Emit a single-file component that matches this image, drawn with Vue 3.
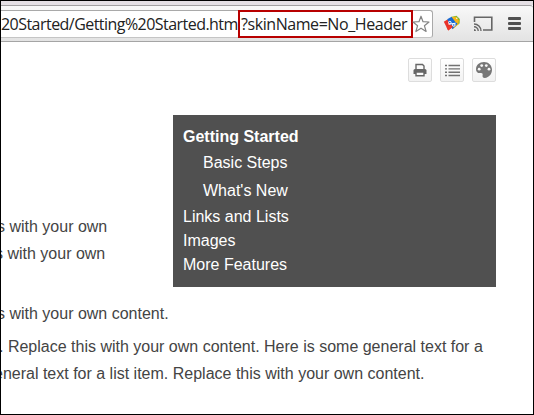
<script setup>
const menu = [
  { text: 'Getting Started', kind: 'current' },
  { text: 'Basic Steps', kind: 'child' },
  { text: "What's New", kind: 'child' },
  { text: 'Links and Lists', kind: 'top' },
  { text: 'Images', kind: 'top' },
  { text: 'More Features', kind: 'top' },
]
</script>

<template>
  <div class="window">
    <div class="tabstrip"></div>
    <div class="toolbar">
      <div class="address">
        <span class="url">20Started/Getting%20Started.htm</span>
        <span class="query">?skinName=No_Header</span>
        <svg class="star" width="18" height="18" viewBox="0 0 18 18">
          <path d="M9 1.2 11 6.7 17 7 12.4 10.7 14.1 16.5 9 13.2 3.9 16.5 5.6 10.7 1 7 7 6.7Z" fill="#fff" stroke="#858585" stroke-width="1.2" stroke-linejoin="round" />
        </svg>
      </div>
      <svg class="tags" width="18" height="17" viewBox="0 0 18 17">
        <path d="M8 2 13.5 .8 16.8 4 16.6 8.5 11 12Z" fill="#83b52a" />
        <path d="M7 4 12.5 1.6 15.6 5 15.6 9.2 10 14Z" fill="#f7b900" />
        <path d="M.8 6.8 4.4 4.4 10 11.8 5.2 15.4Z" fill="#e8322a" />
        <path d="M4.2 4.2 8.6 1.8 14.6 8.8 9.4 14.2Z" fill="#1769d2" />
        <path d="M8.6 1.8 13 2.6 15.2 5.2 14.8 8.6 12.6 7.2Z" fill="#f5b51b" />
        <path d="M5.2 15.4 3.6 12.4 8 9.4 10 11.8Z" fill="#f03828" />
        <path d="M5.5 9.2 12.7 8.2" stroke="#fff" stroke-width="1" />
        <circle cx="6.8" cy="7.6" r="1.3" fill="none" stroke="#fff" />
        <circle cx="10.8" cy="10" r="1.3" fill="none" stroke="#fff" />
        <circle cx="13.8" cy="3.3" r=".7" fill="#fff" />
      </svg>
      <svg class="cast" width="20" height="16" viewBox="0 0 20 16">
        <path d="M1.5 6V1.2H18.8V14H10" fill="none" stroke="#666" stroke-width="1.6" />
        <path d="M1 8a7 7 0 0 1 7 7M1 10.8A4.2 4.2 0 0 1 5.2 15" fill="none" stroke="#666" stroke-width="1.4" />
        <path d="M1 13a2 2 0 0 1 2 2H1Z" fill="#666" />
      </svg>
      <div class="burger"><i></i><i></i><i></i></div>
    </div>

    <div class="page">
      <div class="tools">
        <button class="tool">
          <svg width="14" height="14" viewBox="0 0 14 14">
            <path d="M3 6V1.5H9.5L11 3V6" fill="#fafafa" stroke="#666" stroke-width="1.4" />
            <path d="M.5 11V7.5Q.5 6 2 6H12Q13.5 6 13.5 7.5V11Z" fill="#666" />
            <path d="M3 9H11V12.8H3Z" fill="#fafafa" stroke="#666" stroke-width="1.4" />
          </svg>
        </button>
        <button class="tool">
          <svg width="15" height="13" viewBox="0 0 15 13">
            <path d="M0 1.5H2M0 4.8H2M0 8.2H2M0 11.5H2M3.5 1.5H15M3.5 4.8H15M3.5 8.2H15M3.5 11.5H15" stroke="#717171" stroke-width="1.35" />
          </svg>
        </button>
        <button class="tool">
          <svg width="16" height="16" viewBox="0 0 16 16">
            <path d="M8 0C3.5 0 0 3 0 7.2C0 10 2 11.5 4.3 11C6 10.6 7 11.5 6.6 13C6.2 14.8 7 16 8.8 16C13 15.6 16 12.2 16 7.8C16 3.3 12.5 0 8 0Z" fill="#777" />
            <circle cx="3.2" cy="7.2" r="1.4" fill="#f7f7f7" />
            <circle cx="5.7" cy="3.6" r="1.4" fill="#f7f7f7" />
            <circle cx="10.3" cy="3.6" r="1.4" fill="#f7f7f7" />
            <circle cx="13" cy="7.2" r="1.4" fill="#f7f7f7" />
          </svg>
        </button>
      </div>

      <div class="upper">
        <div class="intro">
          <p class="line first">s with your own</p>
          <p class="line second">s with your own</p>
        </div>
        <nav class="menu">
          <a v-for="item in menu" :key="item.text" :class="item.kind">{{ item.text }}</a>
        </nav>
      </div>

      <p class="line third">s with your own content.</p>
      <p class="line fourth">. Replace this with your own content. Here is some general text for a</p>
      <p class="line fifth">eneral text for a list item. Replace this with your own content.</p>
    </div>
  </div>
</template>

<style>
body { margin: 0; overflow: hidden; }
</style>

<style scoped>
.window {
  box-sizing: border-box;
  width: 534px;
  height: 415px;
  border: 1px solid #000;
  background: #fff;
  overflow: hidden;
  font-family: "Liberation Sans", Arial, sans-serif;
}
.tabstrip { height: 4px; background: #e4dfe4; }
.toolbar {
  box-sizing: border-box;
  display: flex;
  align-items: flex-start;
  height: 37px;
  border-top: 1px solid #a2a0a2;
  border-bottom: 1px solid #a5a5a5;
  border-top-right-radius: 3px;
  background: linear-gradient(#f8f8f8, #e3e3e3);
}
.address {
  box-sizing: border-box;
  display: flex;
  align-items: center;
  width: 432px;
  height: 28px;
  margin-top: 4px;
  border: 1px solid #a9a9a9;
  border-bottom-color: #c5c5c5;
  border-left: 0;
  border-radius: 0 3px 3px 0;
  background: #fff;
  font: 16px/26px "Open Sans", "Noto Sans", sans-serif;
  color: #222;
}
.url { width: 237px; white-space: nowrap; letter-spacing: -.54px; flex: none; }
.query {
  box-sizing: border-box;
  flex: none;
  width: 175px;
  height: 28px;
  border: 2px solid #b80000;
  padding-left: 1px;
  line-height: 24px;
  white-space: nowrap;
  letter-spacing: -.43px;
}
.star { flex: none; margin-left: -1px; }
.tags { margin: 9px 0 0 10px; }
.cast { margin: 10px 0 0 12px; }
.burger { display: flex; flex-direction: column; gap: 2px; margin: 11px 0 0 15px; }
.burger i { width: 13px; height: 3px; border-radius: 1px; background: #505050; }
.page { display: flex; flex-direction: column; }
.tools { display: flex; gap: 8px; margin: 16px 0 0 407px; }
.tool {
  box-sizing: border-box;
  display: grid;
  place-items: center;
  width: 24px;
  height: 24px;
  padding: 0;
  border: 1px solid #ddd;
  border-radius: 2px;
  background: linear-gradient(#fff, #f2f2f2);
}
.upper { display: flex; margin-top: 33px; height: 172px; }
.intro { width: 172px; padding-top: 98px; flex: none; }
.line {
  margin: 0;
  height: 27px;
  font-size: 16px;
  line-height: 27px;
  white-space: nowrap;
  color: #444;
}
.first { text-indent: -4px; }
.second { text-indent: -6px; }
.third { margin-top: 13px; text-indent: -4px; }
.fourth { margin-top: 6px; text-indent: -2px; }
.fifth { text-indent: -7px; }
.menu {
  box-sizing: border-box;
  display: flex;
  flex-direction: column;
  width: 323px;
  padding: 10px 10px 8px;
  background: #505050;
  color: #fff;
  font-size: 16px;
  line-height: 24px;
}
.current { font-weight: bold; }
.child { padding-left: 20px; line-height: 28px; }
</style>
